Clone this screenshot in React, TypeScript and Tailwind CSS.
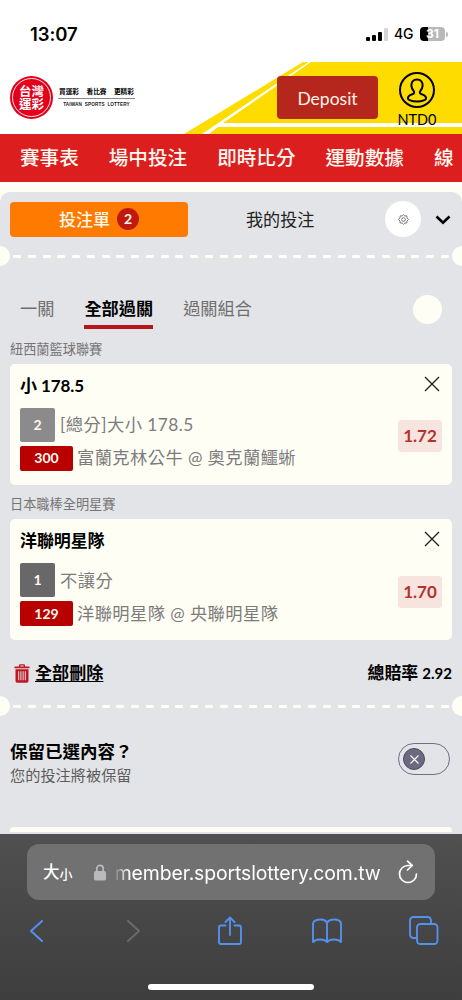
import type { ReactNode } from 'react';

type Bet = {
  league: string;
  pick: string;
  count: string;
  countBg: string;
  market: string;
  code: string;
  match: string;
  odds: string;
};

const bets: Bet[] = [
  {
    league: '紐西蘭籃球聯賽',
    pick: '小 178.5',
    count: '2',
    countBg: 'bg-[#8b8b8b]',
    market: '[總分]大小 178.5',
    code: '300',
    match: '富蘭克林公牛 @ 奧克蘭鱷蜥',
    odds: '1.72',
  },
  {
    league: '日本職棒全明星賽',
    pick: '洋聯明星隊',
    count: '1',
    countBg: 'bg-[#686868]',
    market: '不讓分',
    code: '129',
    match: '洋聯明星隊 @ 央聯明星隊',
    odds: '1.70',
  },
];

const navItems = ['賽事表', '場中投注', '即時比分', '運動數據', '線'];

function StatusBar() {
  return (
    <div className="flex h-[62px] items-start justify-between bg-white pl-[30px] pr-[14px] font-['Inter']">
      <span className="mt-[20px] text-[18.5px] font-semibold leading-[28px] tracking-[-0.1px] text-black">13:07</span>
      <div className="mt-[26px] flex h-4 items-center">
        <div className="flex h-[13px] items-end gap-[2px]">
          <i className="h-[4px] w-[4px] rounded-[1px] bg-black" />
          <i className="h-[6px] w-[4px] rounded-[1px] bg-black" />
          <i className="h-[9px] w-[4px] rounded-[1px] bg-black" />
          <i className="h-[13px] w-[4px] rounded-[1px] bg-[#d5d5d5]" />
        </div>
        <span className="ml-[6px] w-[20px] text-[14px] font-medium leading-4 tracking-[-0.3px] text-black">4G</span>
        <div className="ml-[6px] flex h-[14px] w-[25px] items-center justify-center rounded-[4px] bg-[linear-gradient(90deg,#000_31%,#b9b9b9_31%)] text-[12px] font-bold leading-none text-white">
          31
        </div>
        <i className="ml-px h-[5px] w-[2px] rounded-r-full bg-[#b9b9b9]" />
      </div>
    </div>
  );
}

function Logo() {
  return (
    <div className="flex items-center">
      <div className="flex size-[43px] items-center justify-center rounded-full bg-[#e2001a]">
        <div className="flex size-[39px] flex-col items-center justify-center rounded-full border border-white/90 text-[12.5px] font-bold leading-[13px] text-white">
          <span>台灣</span>
          <span>運彩</span>
        </div>
      </div>
      <div className="ml-[5px] flex w-[77px] flex-col items-center">
        <div className="flex w-full justify-between border-b border-[#888] px-[1px] pb-[2px] text-[6.7px] font-bold leading-[9px] text-black">
          <span>買運彩</span>
          <span>看比賽</span>
          <span>更精彩</span>
        </div>
        <span className="mt-[1px] whitespace-nowrap font-['Liberation_Sans'] text-[4.7px] font-bold leading-[9px] tracking-[0.1px] text-[#222]">
          TAIWAN&nbsp; SPORTS&nbsp; LOTTERY
        </span>
      </div>
    </div>
  );
}

function Header() {
  return (
    <header className="relative h-[72px] bg-white">
      <svg className="absolute inset-0" width="462" height="72" viewBox="0 0 462 72">
        <path d="M303 0H462V72H184Z" fill="#ffdc00" />
        <path d="M311 0H308.500L202 72H209L223 61Z" fill="#fff" />
        <path d="M219 61H462V65H213Z" fill="#fff" />
      </svg>
      <div className="relative flex justify-between pl-[10px] pr-[22px]">
        <div className="mt-[14px]">
          <Logo />
        </div>
        <div className="flex">
          <button className="mt-[14px] h-[43px] w-[101px] rounded-[4px] bg-[#b5261c] text-[17.500px] leading-[45px] text-[#fff3e8]">
            Deposit
          </button>
          <div className="ml-[16px] mt-[9px] flex w-[46px] flex-col items-center">
            <svg width="38" height="38" viewBox="0 0 38 38" fill="none" stroke="#000" strokeWidth="2">
              <circle cx="19" cy="19" r="17" />
              <path d="M19 8.500c-3.800 0-6 2.800-5.600 6.400.2 2.400 1.200 3.800 2.300 5.100.9 1.200.5 2.500-.8 3-2.500 1-4.500 1.300-5 3.900-.2 1.200.5 1.800 1.600 2.200 4.300 1.700 10.700 1.700 15 0 1.100-.4 1.800-1 1.600-2.200-.5-2.600-2.500-2.900-5-3.900-1.300-.5-1.700-1.800-.8-3 1.100-1.300 2.100-2.700 2.300-5.100.4-3.600-1.800-6.400-5.600-6.400Z" />
            </svg>
            <span className="mt-[1px] text-[14.500px] leading-[20px] text-black">NTD0</span>
          </div>
        </div>
      </div>
    </header>
  );
}

function TearLine() {
  return (
    <div className="flex h-5 items-center">
      <i className="h-5 w-[10px] rounded-r-full bg-[#fffef5]" />
      <div className="flex flex-1 justify-between pl-[3px] pr-[3px] pt-px">
        {Array.from({ length: 30 }, (_, i) => (
          <i key={i} className="h-[3px] w-[8px] rounded-[1px] bg-[#fffef8]" />
        ))}
      </div>
      <i className="h-5 w-[10px] rounded-l-full bg-[#fffef5]" />
    </div>
  );
}

function Gear() {
  return (
    <svg width="11" height="11" viewBox="0 0 24 24" fill="none" stroke="#555" strokeWidth="1.700">
      <path d="M12 1.500l3 2.800 4.200-.2.500 4.200 3 3.700-3 3.500-.5 4.200-4.200-.1-3 2.900-3-2.900-4.200.1-.5-4.200-3-3.500 3-3.700.5-4.200 4.200.2z" />
      <circle cx="12" cy="12" r="4" />
    </svg>
  );
}

function SlipTabs() {
  return (
    <div className="flex h-[54px] items-center px-[10px]">
      <div className="flex h-[35px] w-[178px] items-center justify-center rounded-[4px] bg-[#ff7a00] text-[17px] font-medium leading-[35px] text-[#fff8ea]">
        投注單
        <span className="ml-[7px] flex size-[22px] items-center justify-center rounded-full bg-[#c2190f] text-[14px] font-bold leading-none">
          2
        </span>
      </div>
      <div className="ml-[58px] w-[70px] text-[17.100px] leading-[35px] text-[#222]">我的投注</div>
      <div className="ml-[69px] flex size-[36px] items-center justify-center rounded-full bg-white">
        <Gear />
      </div>
      <svg className="ml-[14px] mt-[2px]" width="16" height="10" viewBox="0 0 16 10" fill="none" stroke="#000" strokeWidth="2.600">
        <path d="M1.500 1.500L8 7.800l6.500-6.300" />
      </svg>
    </div>
  );
}

function ComboTabs() {
  return (
    <div className="mt-[26px] flex h-[37px] justify-between pl-[20px] pr-[20px] text-[17.200px] leading-[34px] text-[#6f6f6f]">
      <div className="flex gap-[30px]">
        <span>一關</span>
        <span className="h-[37px] border-b-[4px] border-[#b8141d] font-bold text-black">全部過關</span>
        <span>過關組合</span>
      </div>
      <i className="mt-[3px] size-[29px] rounded-full bg-[#fffef5]" />
    </div>
  );
}

function BetCard({ bet }: { bet: Bet }) {
  return (
    <section className="px-[10px]">
      <div className="h-[34.500px] pt-[9.500px] text-[13.200px] leading-[20px] text-[#757575]">{bet.league}</div>
      <div className="h-[121px] rounded-[5px] bg-[#fffef5] px-[10px] pt-[10px]">
        <div className="flex items-center justify-between pr-[2px]">
          <span className="text-[17px] font-bold leading-[24px] tracking-[-0.1px] text-black">{bet.pick}</span>
          <svg width="16" height="16" viewBox="0 0 16 16" stroke="#222" strokeWidth="1.400" className="-mt-[4px]">
            <path d="M1 1l14 14M15 1L1 15" />
          </svg>
        </div>
        <div className="mt-[10px] flex items-center justify-between">
          <div className="flex flex-col gap-[4px] text-[17.300px] text-[#7c7c7c]">
            <div className="flex items-center gap-[5px] leading-[33px] tracking-[0.450px]">
              <Tag className={`h-[34px] w-[35px] ${bet.countBg}`}>{bet.count}</Tag>
              {bet.market}
            </div>
            <div className="flex items-center gap-[4px] leading-[24px] tracking-[0.400px]">
              <Tag className="h-[25px] w-[53px] bg-[#b90000]">{bet.code}</Tag>
              {bet.match}
            </div>
          </div>
          <div className="-mt-[6px] h-[32px] w-[44px] rounded-[3px] bg-[#f8e4df] text-center text-[17px] font-bold leading-[32px] text-[#b3322f]">
            {bet.odds}
          </div>
        </div>
      </div>
    </section>
  );
}

function Tag({ className, children }: { className: string; children: ReactNode }) {
  return (
    <span
      className={`flex items-center justify-center rounded-[2px] text-[14px] font-bold leading-none tracking-normal text-[#fffaf0] ${className}`}
    >
      {children}
    </span>
  );
}

function SlipFooter() {
  return (
    <div className="flex h-[56px] items-center justify-between pl-[14px] pr-[10px] pt-[10px] text-black">
      <div className="flex items-center gap-[5px]">
        <svg width="16" height="19" viewBox="0 0 16 19" fill="#c01622">
          <path d="M5 2.500V1.200Q5 .3 6 .3h4q1 0 1 .9v1.300h4.500v1.700H.5V2.500zm1.300 0h3.400V1.500H6.300z" />
          <path
            fillRule="evenodd"
            d="M1.500 5.300h13V17q0 1.700-1.700 1.700H3.200Q1.500 18.700 1.500 17zm2.700 2v9h1v-9zm2.200 0v9h1v-9zm2.200 0v9h1v-9zm2.200 0v9h1v-9z"
          />
        </svg>
        <span className="text-[17.100px] font-bold leading-[24px] underline underline-offset-[2px]">全部刪除</span>
      </div>
      <span className="text-[16.900px] font-bold leading-[24px]">
        總賠率 <span className="text-[15px]">2.92</span>
      </span>
    </div>
  );
}

function KeepSelection() {
  return (
    <div className="mt-[23px] flex h-[88px] justify-between pl-[10px] pr-[12px]">
      <div>
        <div className="text-[17.500px] font-bold leading-[26px] text-black">保留已選內容？</div>
        <div className="text-[15.200px] leading-[20px] text-[#5c5c5c]">您的投注將被保留</div>
      </div>
      <div className="mt-[4px] flex h-[32px] w-[52px] items-center rounded-full border border-[#716e85] pl-[4px]">
        <div className="flex size-[22px] items-center justify-center rounded-full border border-[#4d4a63] bg-[#6b6880]">
          <svg width="9" height="9" viewBox="0 0 9 9" stroke="#fff" strokeWidth="1.100">
            <path d="M.5.5l8 8M8.500.5l-8 8" />
          </svg>
        </div>
      </div>
    </div>
  );
}

function BrowserBar() {
  return (
    <footer className="h-[166px] bg-gradient-to-b from-[#505050] to-[#3e3e3e] px-[27px] pt-[10px]">
      <div className="flex h-[56px] w-[408px] items-center rounded-[12px] bg-[#717171] pl-[16px] pr-[16px] text-white">
        <span className="text-[16.500px] font-medium leading-[24px]">大</span>
        <span className="mt-[3px] text-[13px] font-medium leading-[20px]">小</span>
        <svg className="ml-[21px] mt-[1px]" width="12" height="17" viewBox="0 0 12 17">
          <path d="M2.800 8V4.500a3.200 3.200 0 016.400 0V8" fill="none" stroke="#b9b9be" strokeWidth="1.700" />
          <rect x="0" y="7" width="12" height="9.500" rx="1.800" fill="#b9b9be" />
        </svg>
        <div className="ml-[8px] flex w-[267px] justify-end overflow-hidden whitespace-nowrap pt-[2px] font-['Inter'] text-[19.400px] leading-[28px] tracking-[-0.1px] [mask-image:linear-gradient(90deg,transparent,#000_14px)]">
          member.sportslottery.com.tw
        </div>
        <svg className="ml-auto" width="22" height="24" viewBox="0 0 22 24" fill="none" stroke="#fff" strokeWidth="1.700">
          <path d="M14.500 5.500H11a8.500 8.500 0 108.500 8.500" strokeLinecap="round" />
          <path d="M10.500 1.200l4.700 4.300-4.700 4.500" strokeLinecap="round" strokeLinejoin="round" />
        </svg>
      </div>
      <div className="-ml-[40px] -mr-[38px] mt-[15px] grid h-[32px] grid-cols-5 items-center justify-items-center">
        <svg width="16" height="24" viewBox="0 0 16 24" fill="none" stroke="#5490ee" strokeWidth="2" strokeLinecap="round" strokeLinejoin="round">
          <path d="M14 2L3 12l11 10" />
        </svg>
        <svg width="16" height="24" viewBox="0 0 16 24" fill="none" stroke="#6a6a6a" strokeWidth="2" strokeLinecap="round" strokeLinejoin="round">
          <path d="M3 2l11 10L3 22" />
        </svg>
        <svg width="26" height="32" viewBox="0 0 26 32" fill="none" stroke="#5490ee" strokeWidth="1.900" strokeLinecap="round" strokeLinejoin="round">
          <path d="M8.500 10.500H4a2 2 0 00-2 2V27a2 2 0 002 2h18a2 2 0 002-2V12.500a2 2 0 00-2-2h-4.500" />
          <path d="M13 20V2.500M8.500 7L13 2.500 17.500 7" />
        </svg>
        <svg width="30" height="26" viewBox="0 0 30 26" fill="none" stroke="#5490ee" strokeWidth="1.900" strokeLinejoin="round">
          <path d="M15 24V5C14 2.500 11.500 1.500 8.500 1.500S2 2.500 1 5v19c1.500-1.700 4-2.500 7-2.500s5.500.8 7 2.500c1.500-1.700 4-2.500 7-2.500s5.500.8 7 2.500V5c-1-2.500-3.500-3.500-6.500-3.500S16 2.500 15 5" />
        </svg>
        <svg width="30" height="30" viewBox="0 0 30 30" fill="none" stroke="#5490ee" strokeWidth="1.900">
          <rect x="8" y="8" width="20.500" height="20" rx="3.500" />
          <path d="M8 22H4.500A3.500 3.500 0 011 18.500v-14A3.500 3.500 0 014.500 1h14A3.500 3.500 0 0122 4.500V8" />
        </svg>
      </div>
      <div className="mx-auto mt-[37px] h-[6px] w-[166px] rounded-full bg-white" />
    </footer>
  );
}

export default function App() {
  return (
    <main
      lang="zh-Hant"
      className="h-[1000px] w-[462px] overflow-hidden bg-[#fffef5] font-['Lato','Noto_Sans_CJK_TC',sans-serif]"
    >
      <StatusBar />
      <Header />
      <nav className="flex h-[48px] gap-[30px] overflow-hidden whitespace-nowrap bg-[#dc1e1e] pl-[20px] text-[19.600px] font-medium leading-[48px] text-[#fff8f0]">
        {navItems.map((item) => (
          <span key={item} className="shrink-0">
            {item}
          </span>
        ))}
      </nav>
      <div className="mt-[10px] h-[642px] rounded-t-[10px] bg-[#e3e4e7]">
        <SlipTabs />
        <TearLine />
        <ComboTabs />
        {bets.map((bet) => (
          <BetCard key={bet.code} bet={bet} />
        ))}
        <SlipFooter />
        <TearLine />
        <KeepSelection />
        <div className="mx-[10px] h-[5px] rounded-t-[4px] bg-[#fffef5]" />
      </div>
      <BrowserBar />
    </main>
  );
}
